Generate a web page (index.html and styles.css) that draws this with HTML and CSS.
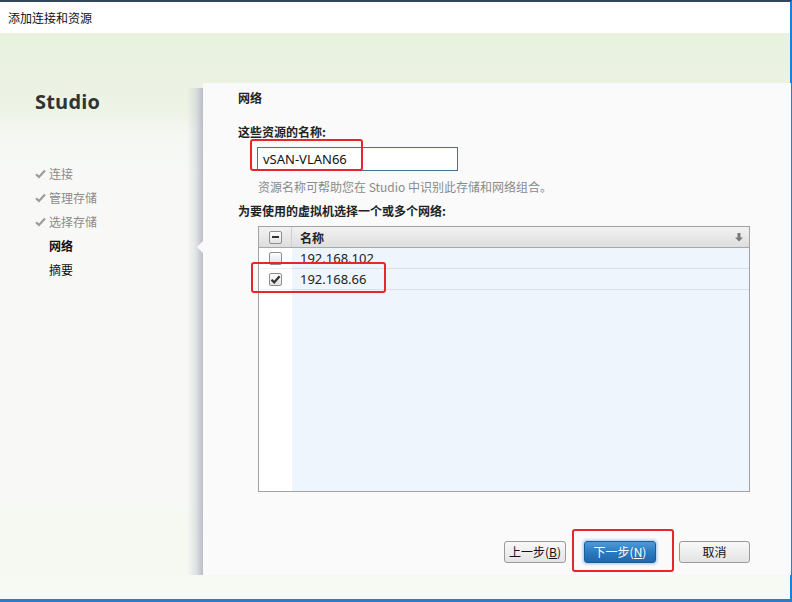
FILE: index.html
```html
<!DOCTYPE html>
<html lang="zh-CN">
<head>
<meta charset="utf-8">
<title>添加连接和资源</title>
<link rel="stylesheet" href="styles.css">
</head>
<body>
<div class="window">
  <div class="titlebar">添加连接和资源</div>
  <div class="main">
    <aside class="sidebar">
      <div class="brand">Studio</div>
      <ul class="steps">
        <li class="done"><span class="tick"><svg width="11" height="10" viewBox="0 0 11 10"><path d="M1 5.2 L4 8 L10 1.5" fill="none" stroke="#9c9c9c" stroke-width="2.2"/></svg></span>连接</li>
        <li class="done"><span class="tick"><svg width="11" height="10" viewBox="0 0 11 10"><path d="M1 5.2 L4 8 L10 1.5" fill="none" stroke="#9c9c9c" stroke-width="2.2"/></svg></span>管理存储</li>
        <li class="done"><span class="tick"><svg width="11" height="10" viewBox="0 0 11 10"><path d="M1 5.2 L4 8 L10 1.5" fill="none" stroke="#9c9c9c" stroke-width="2.2"/></svg></span>选择存储</li>
        <li class="current"><span class="tick"></span>网络</li>
        <li class="todo"><span class="tick"></span>摘要</li>
      </ul>
    </aside>
    <section class="panel">
      <h2 class="heading">网络</h2>
      <div class="label first">这些资源的名称:</div>
      <div class="input">vSAN-VLAN66</div>
      <div class="helper">资源名称可帮助您在 Studio 中识别此存储和网络组合。</div>
      <div class="label">为要使用的虚拟机选择一个或多个网络:</div>
      <div class="table">
        <div class="thead">
          <div class="cbcol"><span class="cb partial"><span class="dash"></span></span></div>
          <div class="namecol">名称</div>
          <div class="sort">
            <svg width="8" height="9" viewBox="0 0 8 9"><rect x="2.5" y="0" width="3" height="5" fill="#7a7a7a"/><path d="M0 4.5 H8 L4 8.5 Z" fill="#7a7a7a"/></svg>
          </div>
        </div>
        <div class="tbody">
          <div class="row">
            <div class="cbcol"><span class="cb"></span></div>
            <div class="namecol">192.168.102</div>
          </div>
          <div class="row">
            <div class="cbcol"><span class="cb checked"><svg width="11" height="11" viewBox="0 0 11 11"><path d="M1.5 5.8 L4.2 8.4 L9.6 2.2" fill="none" stroke="#333" stroke-width="2.2"/></svg></span></div>
            <div class="namecol">192.168.66</div>
          </div>
          <div class="fill">
            <div class="cbcol"></div>
            <div class="namecol"></div>
          </div>
        </div>
      </div>
      <div class="buttons">
        <button class="btn prev">上一步(<u>B</u>)</button>
        <button class="btn next">下一步(<u>N</u>)</button>
        <button class="btn cancel">取消</button>
      </div>
    </section>
  </div>
</div>
<div class="mark mark-input"></div>
<div class="mark mark-row"></div>
<div class="mark mark-next"></div>
</body>
</html>
```

FILE: styles.css
```css
* { box-sizing: border-box; }
html, body { margin: 0; padding: 0; }
body {
  width: 792px;
  height: 602px;
  position: relative;
  overflow: hidden;
  font-family: "Noto Sans CJK SC", "Microsoft YaHei", sans-serif;
  font-size: 12px;
  color: #222;
  background: #fff;
}
.window {
  height: 602px;
  display: flex;
  flex-direction: column;
  border-top: 2px solid #33475c;
  border-right: 2px solid #1d7fd8;
  border-bottom: 3px solid #2b7bcb;
}
.titlebar {
  height: 31px;
  line-height: 31px;
  padding-left: 8px;
  background: #fff;
  color: #111;
  font-size: 12px;
}
.main {
  flex: 1;
  display: flex;
  background: linear-gradient(#e9f1df 0, #edf3e5 80px, #f4f7f1 98px, #f8f9f7 140px, #f8f9f7 470px, #f5f9f0 490px, #f7f9f4 100%);
}
.sidebar {
  width: 203px;
  flex: none;
  padding-left: 35px;
}
.brand {
  margin-top: 57px;
  font-family: "Open Sans", "Noto Sans", sans-serif;
  font-weight: 700;
  font-size: 20px;
  line-height: 24px;
  color: #333;
  letter-spacing: 0.2px;
}
.steps {
  list-style: none;
  margin: 48px 0 0;
  padding: 0;
}
.steps li {
  height: 24px;
  line-height: 24px;
  display: flex;
  align-items: center;
  color: #8a8a8a;
}
.steps .tick {
  width: 14px;
  display: flex;
  align-items: center;
}
.steps .current { color: #111; font-weight: 700; }
.steps .todo { color: #111; }
.panel {
  flex: 1;
  margin: 50px 0 24px;
  padding: 7px 41px 0 35px;
  background: #fafafa;
  position: relative;
  display: flex;
  flex-direction: column;
  align-items: flex-start;
}
.panel::before {
  content: "";
  position: absolute;
  left: -16px;
  top: 5px;
  bottom: 0;
  width: 16px;
  background: linear-gradient(to right, rgba(200,204,212,0) 0, rgba(196,200,208,0.45) 55%, #b9bdc6 100%);
}
.panel::after {
  content: "";
  position: absolute;
  left: -6px;
  top: 158px;
  border-top: 6px solid transparent;
  border-bottom: 6px solid transparent;
  border-right: 6px solid #fafafa;
}
.heading {
  margin: 0;
  font-size: 12px;
  font-weight: 700;
  line-height: 16px;
  color: #222;
}
.label {
  font-weight: 700;
  line-height: 16px;
  margin-top: 8px;
  color: #222;
}
.label.first { margin-top: 18px; }
.input {
  margin: 7px 0 0 19px;
  width: 201px;
  height: 24px;
  border: 1px solid #4f6f8e;
  background: #fff;
  padding-left: 5px;
  line-height: 22px;
  font-family: "Noto Sans", "Open Sans", sans-serif;
  font-size: 13px;
  color: #111;
}
.helper {
  margin: 8px 0 0 20px;
  line-height: 16px;
  color: #8a8a8a;
}
.table {
  margin: 7px 0 0 20px;
  width: 492px;
  height: 266px;
  border: 1px solid #a2a2a2;
  display: flex;
  flex-direction: column;
  background: #fff;
}
.thead {
  height: 21px;
  flex: none;
  display: flex;
  align-items: stretch;
  background: linear-gradient(#f2f2f2, #dedede);
  border-bottom: 1px solid #a8a8a8;
}
.cbcol {
  width: 33px;
  flex: none;
  display: flex;
  align-items: center;
  justify-content: center;
}
.thead .cbcol { border-right: 1px solid #cfcfcf; }
.namecol {
  flex: 1;
  display: flex;
  align-items: center;
  padding-left: 8px;
}
.thead .namecol { font-weight: 700; color: #222; }
.sort {
  width: 20px;
  display: flex;
  align-items: center;
  justify-content: center;
}
.tbody {
  flex: 1;
  display: flex;
  flex-direction: column;
}
.row {
  height: 21px;
  flex: none;
  display: flex;
}
.row .namecol {
  background: #eef5fd;
  border-bottom: 1px solid #d9dfe7;
  font-family: "Noto Sans", "Open Sans", sans-serif;
  font-size: 13px;
  color: #222;
}
.row .cbcol { border-bottom: 1px solid #f0f0f0; }
.fill { flex: 1; display: flex; }
.fill .namecol { background: #eef5fd; }
.cb {
  width: 13px;
  height: 13px;
  border: 1px solid #8e8e8e;
  border-radius: 2px;
  background: linear-gradient(#fdfdfd, #e2e2e2);
  display: flex;
  align-items: center;
  justify-content: center;
}
.cb .dash {
  width: 7px;
  height: 2px;
  background: #333;
}
.buttons {
  margin-top: 49px;
  align-self: flex-end;
  display: flex;
  gap: 18px;
}
.btn {
  height: 22px;
  border: 1px solid #9a9a9a;
  border-radius: 3px;
  background: linear-gradient(#f8f8f8, #e4e4e4);
  font-family: "Noto Sans CJK SC", sans-serif;
  font-size: 12px;
  color: #111;
  padding: 0;
  line-height: 20px;
}
.btn u { text-decoration: underline; }
.prev { width: 62px; }
.next {
  width: 72px;
  color: #fff;
  border-color: #1d5c99;
  background: linear-gradient(#4c9ad8, #2a78bd 55%, #1f68ab);
  box-shadow: 0 0 3px 1px rgba(90,160,220,0.6);
}
.cancel { width: 71px; margin-left: 5px; }
.mark {
  position: absolute;
  border: 2px solid #e5262b;
  border-radius: 3px;
}
.mark-input { left: 250px; top: 139px; width: 113px; height: 32px; }
.mark-row { left: 251px; top: 262px; width: 135px; height: 31px; }
.mark-next { left: 572px; top: 529px; width: 102px; height: 43px; }
```
